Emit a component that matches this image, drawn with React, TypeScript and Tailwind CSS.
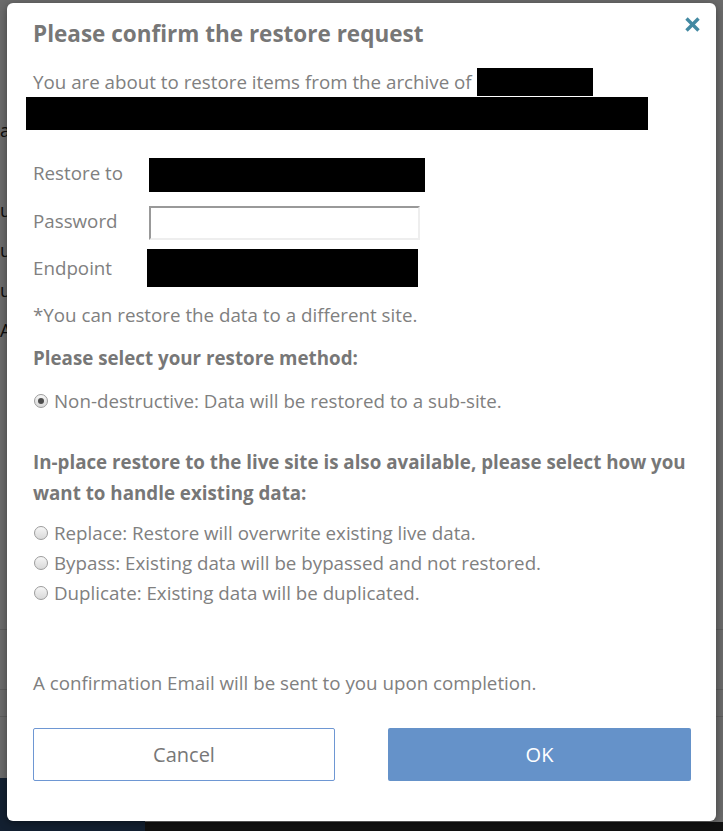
import React from 'react';

const Radio: React.FC<{ checked?: boolean }> = ({ checked }) => {
  return <span className="mt-[8px] flex h-[14px] w-[14px] shrink-0 items-center justify-center rounded-full border border-[#9c9c9c] bg-gradient-to-b from-[#f6f6f6] to-[#d9d9d9]">
      {checked ? <span className="h-[6px] w-[6px] rounded-full bg-[#4d4d4d]" /> : null}
    </span>;
};

const Option: React.FC<{ label: string; checked?: boolean; className?: string }> = ({ label, checked, className }) => {
  return <label className={`flex items-start gap-[6px] pl-px ${className || ''}`}>
      <Radio checked={checked} />
      <span className="leading-[30px]">{label}</span>
    </label>;
};

const App: React.FC = () => {
  return <div className="relative h-[831px] w-full overflow-hidden bg-white font-['Open_Sans',sans-serif]">
      {/* page behind the dialog */}
      <div className="flex h-full flex-col text-[18px] text-[#222]">
        <div className="mt-[118px] leading-[24px]">a</div>
        <div className="mt-[56px] leading-[24px]">u</div>
        <div className="mt-[16px] leading-[24px]">u</div>
        <div className="mt-[16px] leading-[24px]">u</div>
        <div className="mt-[16px] leading-[24px]">A</div>
        <div className="mt-[287px] border-t border-[#dddddd]" />
        <div className="mt-[59px] border-t border-[#dddddd]" />
        <div className="mt-[26px] border-t border-[#dddddd]" />
        <div className="mt-auto flex h-[53px] items-end">
          <div className="h-[53px] w-[145px] bg-[#2f4d75]" />
          <div className="h-[9px] flex-1 bg-[#2a2a2a]" />
        </div>
      </div>
      <div className="absolute inset-0 bg-black/[0.58]" />

      {/* dialog */}
      <div className="absolute left-[7px] top-[3px] flex h-[818px] w-[709px] flex-col rounded-[6px] bg-white pl-[26px] pr-[25px] pt-[15px] text-[18.75px] text-[#808080] shadow-[0_2px_8px_rgba(0,0,0,0.4)]">
        <div className="flex items-start justify-between">
          <h1 className="text-[22.5px] font-bold leading-[32px] text-[#777777]">Please confirm the restore request</h1>
          <button className="-mr-[9px] -mt-px text-[#4389a2]">
            <svg width="15" height="15" viewBox="0 0 15 15" fill="none" stroke="currentColor" strokeWidth="3.4">
              <path d="M1.5 1.5 13.5 13.5" />
              <path d="M13.5 1.5 1.5 13.5" />
            </svg>
          </button>
        </div>

        <div className="mt-[18px] flex items-start">
          <span className="leading-[28px]">You are about to restore items from the archive of</span>
          <div className="ml-[5px] h-[28px] w-[116px] bg-black" />
        </div>
        <div className="-ml-[7px] mt-px h-[33px] w-[622px] bg-black" />

        <div className="mt-[28px] flex items-start">
          <span className="w-[116px] shrink-0 leading-[30px]">Restore to</span>
          <div className="h-[34px] w-[276px] bg-black" />
        </div>
        <div className="mt-[14px] flex items-start">
          <span className="w-[116px] shrink-0 leading-[30px]">Password</span>
          <input type="password" className="h-[34px] w-[271px] border-2 border-b-[#eeeeee] border-l-[#999999] border-r-[#eeeeee] border-t-[#999999] bg-white outline-none" />
        </div>
        <div className="mt-[9px] flex items-start">
          <span className="mt-[4px] w-[114px] shrink-0 leading-[30px]">Endpoint</span>
          <div className="h-[38px] w-[271px] bg-black" />
        </div>

        <p className="mt-[13px] leading-[30px]">*You can restore the data to a different site.</p>
        <p className="mt-[13px] font-bold leading-[30px] text-[#777777]">Please select your restore method:</p>
        <Option className="mt-[13px]" checked label="Non-destructive: Data will be restored to a sub-site." />

        <p className="mt-[30px] font-bold leading-[31px] text-[#777777]">In-place restore to the live site is also available, please select how you want to handle existing data:</p>
        <div className="mt-[10px] flex flex-col">
          <Option label="Replace: Restore will overwrite existing live data." />
          <Option label="Bypass: Existing data will be bypassed and not restored." />
          <Option label="Duplicate: Existing data will be duplicated." />
        </div>

        <p className="mt-[60px] leading-[30px]">A confirmation Email will be sent to you upon completion.</p>

        <div className="mt-[30px] flex items-center justify-between">
          <button className="h-[53px] w-[302px] rounded-[2px] border border-[#6e97d3] bg-white text-[20px] text-[#777777]">Cancel</button>
          <button className="h-[53px] w-[303px] rounded-[2px] bg-[#6592c9] text-[20px] text-white">OK</button>
        </div>
      </div>
    </div>;
};

export default App;
